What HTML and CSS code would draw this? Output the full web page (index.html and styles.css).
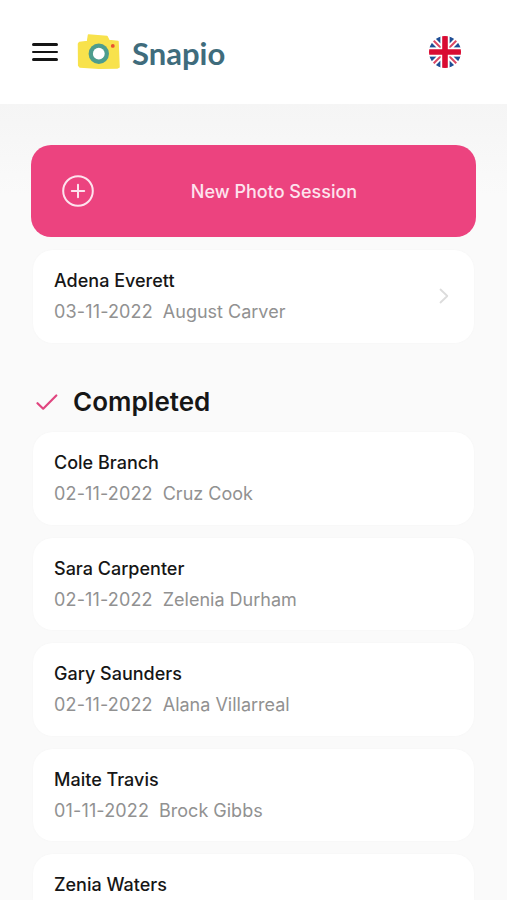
FILE: index.html
```
<!DOCTYPE html>
<html lang="en">
<head>
    <meta charset="UTF-8">
    <meta name="viewport" content="width=device-width, initial-scale=1.0">
    <title>Snapio</title>
    <link rel="stylesheet" href="styles.css">
</head>
<body>
    <header class="header">
        <button class="menu-btn" aria-label="Menu">
            <span></span>
            <span></span>
            <span></span>
        </button>
        <a class="logo" href="#">
            <svg class="logo-icon" width="44" height="38" viewBox="0 0 44 38">
                <path d="M2.500 9.500L10.500 8.500L11.500 2L30 3.500L32 7.500L41 8.500L42 34L40 35L22 35.200L3 34L1.700 32.500L1.500 11Z" fill="#f8e24c" stroke="#f8e24c" stroke-width="1.500" stroke-linejoin="round"/>
                <circle cx="21.800" cy="20.700" r="10.200" fill="#4d9d8e"/>
                <circle cx="21.800" cy="20.700" r="5.900" fill="#fff"/>
                <circle cx="35.800" cy="12.900" r="1.900" fill="#e9532f"/>
            </svg>
            <span class="logo-text">Snapio</span>
        </a>
        <button class="lang-btn" aria-label="English">
            <svg width="32" height="32" viewBox="0 0 32 32">
                <clipPath id="flag"><circle cx="16" cy="16" r="16"/></clipPath>
                <g clip-path="url(#flag)">
                    <rect width="32" height="32" fill="#fff"/>
                    <path d="M11.500 -2V7.500L3.500 -0.500ZM20.500 -2V7.500L28.500 -0.500ZM11.500 34V24.500L3.500 32.500ZM20.500 34V24.500L28.500 32.500ZM-2 11.500H7.500L-0.500 3.500ZM-2 20.500H7.500L-0.500 28.500ZM34 11.500H24.500L32.500 3.500ZM34 20.500H24.500L32.500 28.500Z" fill="#1f4e95"/>
                    <path d="M4 4L12 12M28 28L20 20M28 4L20 12M4 28L12 20" stroke="#dc4763" stroke-width="2"/>
                    <path d="M16 0V32M0 16H32" stroke="#fff" stroke-width="8.500"/>
                    <path d="M16 0V32M0 16H32" stroke="#d90b32" stroke-width="5.600"/>
                </g>
            </svg>
        </button>
    </header>

    <main class="content">
        <button class="new-session">
            <svg width="32" height="32" viewBox="0 0 32 32" fill="none" stroke="#fde3ee" stroke-width="2" stroke-linecap="round">
                <circle cx="16" cy="16" r="14.800"/>
                <path d="M16 9.800V22.200M9.800 16H22.200"/>
            </svg>
            <span>New Photo Session</span>
        </button>

        <a class="card" href="#">
            <div>
                <h3>Adena Everett</h3>
                <p><span class="date">03-11-2022</span><span>August Carver</span></p>
            </div>
            <svg width="10" height="16" viewBox="0 0 10 16" fill="none" stroke="#dcdcdc" stroke-width="1.800" stroke-linecap="round" stroke-linejoin="round">
                <path d="M1.500 1.500L8.300 8L1.500 14.500"/>
            </svg>
        </a>

        <div class="section-title">
            <svg width="22" height="18" viewBox="0 0 22 18" fill="none" stroke="#e0457f" stroke-width="2.200" stroke-linecap="round" stroke-linejoin="round">
                <path d="M1.500 10.200L7.200 15.700L20.300 2.500"/>
            </svg>
            <h2>Completed</h2>
        </div>

        <div class="list">
            <a class="card" href="#">
                <div>
                    <h3>Cole Branch</h3>
                    <p><span class="date">02-11-2022</span><span>Cruz Cook</span></p>
                </div>
            </a>
            <a class="card" href="#">
                <div>
                    <h3>Sara Carpenter</h3>
                    <p><span class="date">02-11-2022</span><span>Zelenia Durham</span></p>
                </div>
            </a>
            <a class="card" href="#">
                <div>
                    <h3>Gary Saunders</h3>
                    <p><span class="date">02-11-2022</span><span>Alana Villarreal</span></p>
                </div>
            </a>
            <a class="card" href="#">
                <div>
                    <h3>Maite Travis</h3>
                    <p><span class="date">01-11-2022</span><span>Brock Gibbs</span></p>
                </div>
            </a>
            <a class="card card-last" href="#">
                <div>
                    <h3>Zenia Waters</h3>
                </div>
            </a>
        </div>
    </main>
</body>
</html>
```
FILE: styles.css
```
* {
    box-sizing: border-box;
}

body {
    font-family: Inter, sans-serif;
    display: flex;
    flex-direction: column;
    margin: 0;
    height: 100vh;
    background-color: #fafafa;
    color: #161616;
}

button {
    border: none;
    padding: 0;
    background: none;
    font-family: inherit;
    cursor: pointer;
}

a {
    color: inherit;
    text-decoration: none;
}

h2,
h3,
p {
    margin: 0;
}

svg {
    display: block;
    flex-shrink: 0;
}

.header {
    display: flex;
    flex-shrink: 0;
    align-items: center;
    height: 104px;
    padding: 0 46px 0 32px;
    background: #fff;
}

.menu-btn {
    display: flex;
    flex-direction: column;
    gap: 5px;
    width: 26px;
}

.menu-btn span {
    height: 2.700px;
    border-radius: 2px;
    background: #151515;
}

.logo {
    display: flex;
    align-items: center;
    margin-left: 19px;
}

.logo-text {
    margin-left: 11px;
    padding-top: 2px;
    font-family: Lato, sans-serif;
    font-size: 31px;
    font-weight: 700;
    line-height: 38px;
    color: #3f6c7c;
}

.lang-btn {
    margin-left: auto;
}

.content {
    flex: 1;
    min-height: 0;
    overflow: hidden;
    padding: 41px 31px 0;
    background: linear-gradient(#f5f5f5, #fafafa 90px);
}

.new-session {
    display: flex;
    align-items: center;
    width: 445px;
    height: 92px;
    margin-bottom: 13px;
    padding: 0 22px 0 31px;
    border-radius: 20px;
    background: #ec437f;
    color: #fde3ee;
    font-size: 18px;
    font-weight: 500;
}

.new-session span {
    flex: 1;
    text-align: center;
}

.card {
    display: flex;
    align-items: center;
    justify-content: space-between;
    height: 92.600px;
    margin: 0 2px;
    padding: 0 25px 0 21px;
    border-radius: 20px;
    background: #fff;
    box-shadow: 0 0 3px rgba(0, 0, 0, 0.025);
}

.card h3 {
    font-size: 18px;
    font-weight: 500;
    line-height: 31px;
}

.card p {
    display: flex;
    gap: 10px;
    font-size: 18px;
    line-height: 31px;
    color: #919191;
}

.card .date {
    letter-spacing: 0.150px;
}

/* runs off under the bottom of the screen */
.card-last {
    align-items: flex-start;
    height: 45.600px;
    padding-top: 15px;
    border-radius: 20px 20px 0 0;
}

.section-title {
    display: flex;
    align-items: center;
    gap: 15px;
    height: 34px;
    margin: 42px 0 13px 5px;
}

.section-title h2 {
    font-size: 26px;
    font-weight: 600;
    line-height: 34px;
}

.list {
    display: flex;
    flex-direction: column;
    gap: 13px;
    padding-top: 0.400px;
}
```
